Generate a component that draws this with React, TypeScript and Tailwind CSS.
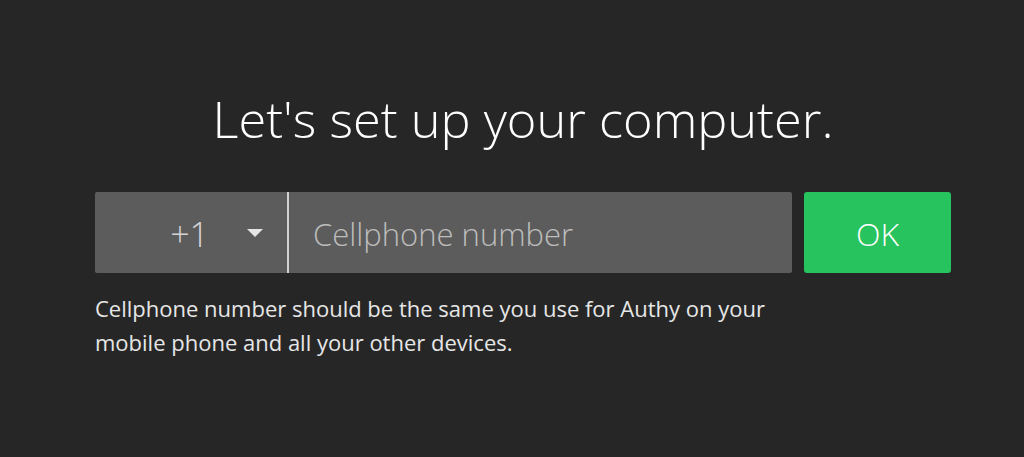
import { useState } from 'react';

export default function App() {
  const [phone, setPhone] = useState('');

  return (
    <div
      className="w-full h-[457px] bg-[#262626] flex flex-col items-center pl-[22px]"
      style={{ fontFamily: '"Open Sans", "Noto Sans", sans-serif' }}
    >
      <h1 className="mt-[87px] text-[50.5px] leading-[64px] font-light text-white">Let's set up your computer.</h1>

      <div className="mt-[41px] w-[856px] flex gap-[12px]">
        <div className="flex-1 h-[81px] flex bg-[#5c5c5c] rounded-[2px]">
          <button className="w-[192px] h-full flex items-center justify-end pr-[24px] pt-[3px] text-[#d4d4d4]">
            <span className="text-[34px] font-light mr-[38px]">+1</span>
            <svg width="16" height="8" viewBox="0 0 16 8" className="-mt-[3px]">
              <path d="M0 0 L16 0 L8 8 Z" fill="#e6e6e6" />
            </svg>
          </button>
          <div className="w-[2px] h-full bg-[#d0d0d0]" />
          <input
            value={phone}
            onChange={(e) => setPhone(e.target.value)}
            placeholder="Cellphone number"
            className="flex-1 h-full bg-transparent px-[24px] pt-[3px] text-[31px] font-light text-white placeholder:text-[#bdbdbd] outline-none"
          />
        </div>
        <button className="w-[147px] h-[81px] bg-[#26c35e] rounded-[3px] pt-[2px] text-white text-[32px] font-light">OK</button>
      </div>

      <p className="mt-[18px] w-[856px] text-[22px] leading-[34px] text-[#e6e6e6]">
        Cellphone number should be the same you use for Authy on your
        <br />
        mobile phone and all your other devices.
      </p>
    </div>
  );
}
